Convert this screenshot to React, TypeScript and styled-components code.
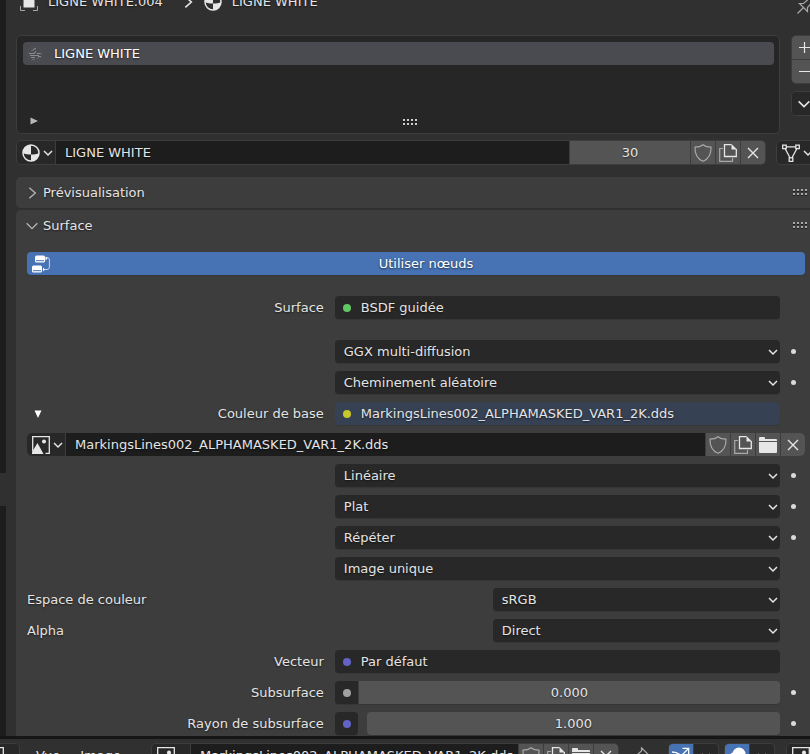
import React, { useState } from "react";
import styled, { createGlobalStyle, css } from "styled-components";

const GlobalStyle = createGlobalStyle`
  *, *::before, *::after { box-sizing: border-box; }
  body {
    margin: 0;
    background: #303030;
    color: #e4e4e4;
    font: 13px/18px "DejaVu Sans", sans-serif;
    overflow: hidden;
  }
  button, input, select {
    margin: 0;
    padding: 0;
    border: 0;
    background: none;
    color: inherit;
    font: inherit;
    text-shadow: inherit;
    min-width: 0;
  }
  svg { display: block; flex: none; }
`;

/* ---------- layout ---------- */

const Screen = styled.div`
  display: flex;
  flex-direction: column;
  height: 100vh;
  overflow: hidden;
  text-shadow: 0 1px 2px rgba(0, 0, 0, 0.6);
`;

const Workspace = styled.div`
  display: flex;
  flex: 1;
  min-height: 0;
  overflow: hidden;
`;

const Gutter = styled.div`
  display: flex;
  flex-direction: column;
  flex: 0 0 6px;
  gap: 33px;
`;

const GutterArea = styled.div<{ $grow: number }>`
  flex: ${(p) => p.$grow} 1 0;
  background: #1d1d1d;
`;

const Editor = styled.main`
  flex: 1;
  min-width: 0;
  margin: 0 -6px 0 10px;
`;

const Breadcrumb = styled.nav`
  display: flex;
  align-items: flex-end;
  height: 35px;
  padding: 0 1px 21px 4px;
  overflow: hidden;
`;

const Crumbs = styled.div`
  display: flex;
  flex: 1;
  align-items: center;
  height: 24px;
`;

const Crumb = styled.span`
  display: flex;
  align-items: center;
  gap: 10px;
`;

const CrumbArrow = styled.span`
  margin: 0 8px 0 17px;
`;

const SlotArea = styled.section`
  display: flex;
  gap: 11px;
  margin-bottom: 6px;
`;

const SlotList = styled.div`
  display: flex;
  flex: 1;
  flex-direction: column;
  justify-content: space-between;
  height: 99px;
  padding: 6px 5px 6px 6px;
  border: 1px solid #3d3d3d;
  border-radius: 5px;
  background: #262626;
`;

const Slot = styled.button`
  display: flex;
  align-items: center;
  gap: 10px;
  height: 23px;
  padding-left: 3px;
  border-radius: 4px;
  background: #4a4b50;
  color: #ffffff;
`;

const SlotFooter = styled.div`
  display: grid;
  grid-template-columns: 23fr auto 22fr;
  align-items: center;
  padding: 0 0 0 7px;
  height: 12px;
  > :last-child { align-self: end; }
`;

const SideTools = styled.div`
  display: flex;
  flex-direction: column;
  gap: 7px;
  width: 25px;
`;

const Cluster = styled.div<{ $vertical?: boolean; $grow?: boolean }>`
  display: flex;
  flex-direction: ${(p) => (p.$vertical ? "column" : "row")};
  flex: ${(p) => (p.$grow ? "1" : "none")};
  gap: 1px;
  min-width: 0;
  overflow: hidden;
  border-radius: 5px;
  background: #3d3d3d;
`;

const Framed = styled(Cluster)`
  border: 1px solid #3d3d3d;
`;

const DataRow = styled.div`
  display: flex;
  gap: 10px;
  margin-bottom: 12px;
`;

/* ---------- controls ---------- */

const IconButton = styled.button<{ $dark?: boolean; $wide?: boolean; $on?: boolean }>`
  display: flex;
  flex: none;
  align-items: center;
  justify-content: ${(p) => (p.$wide ? "flex-start" : "center")};
  gap: 2px;
  width: ${(p) => (p.$wide ? 38 : 24)}px;
  height: 23px;
  padding-left: ${(p) => (p.$wide ? 5 : 0)}px;
  background: ${(p) => (p.$on ? "#4772b3" : p.$dark ? "#282828" : "#545454")};
`;

const NameInput = styled.input`
  flex: 1;
  height: 23px;
  padding: 0 4px 0 9px;
  background: #1d1d1d;
  text-overflow: clip;
`;

const UserCount = styled.button`
  flex: none;
  width: 120px;
  height: 23px;
  background: #545454;
`;

const Panel = styled.section`
  margin-bottom: 2px;
  padding: 0 11px;
  border-radius: 5px;
  background: #3d3d3d;
`;

const PanelHeader = styled.header`
  display: flex;
  align-items: center;
  justify-content: space-between;
  height: 31px;
  margin: 0 -3px;
`;

const PanelToggle = styled.button`
  display: flex;
  align-items: center;
  gap: 3px;
`;

const PanelBody = styled.div`
  display: flex;
  flex-direction: column;
  gap: 8px;
  padding: 11px 0 8px;
`;

const NodesButton = styled.button`
  display: grid;
  grid-template-columns: 26px 1fr;
  align-items: center;
  height: 23px;
  margin-bottom: 13px;
  padding: 0 5px;
  border-radius: 4px;
  background: #4772b3;
  color: #ffffff;
  box-shadow: 0 1px 0 #373737;
`;

const NodesLabel = styled.span`
  padding-right: 6px;
`;

const Property = styled.div<{ $split?: "even" | "wide"; $spaced?: boolean }>`
  display: grid;
  grid-template-columns: ${(p) =>
    p.$split === "wide" ? "minmax(0, 19fr) minmax(0, 12fr) 14px" : "minmax(0, 2fr) minmax(0, 3fr) 14px"};
  column-gap: 11px;
  align-items: center;
  height: 23px;
  margin-bottom: ${(p) => (p.$spaced ? 13 : 0)}px;
`;

const LabelCell = styled.div<{ $left?: boolean }>`
  display: flex;
  align-items: center;
  justify-content: ${(p) => (p.$left ? "flex-start" : "space-between")};
  white-space: nowrap;
`;

const Label = styled.label<{ $left?: boolean }>`
  margin-left: ${(p) => (p.$left ? "0" : "auto")};
`;

const Expander = styled.button`
  width: 22px;
  display: flex;
  justify-content: center;
`;

const field = css`
  height: 23px;
  border-radius: 4px;
  background: #282828;
  box-shadow: 0 1px 0 #363636;
`;

const SelectWrap = styled.span`
  display: grid;
  align-items: center;
  > * { grid-area: 1 / 1; }
  > svg { justify-self: end; margin-right: 1px; pointer-events: none; }
`;

const Select = styled.select`
  ${field}
  width: 100%;
  padding: 0 20px 0 9px;
  appearance: none;
`;

const SocketButton = styled.button<{ $linked?: boolean }>`
  ${field}
  display: flex;
  align-items: center;
  gap: 10px;
  padding: 0 8px;
  background: ${(p) => (p.$linked ? "#364154" : "#282828")};
`;

const SocketDot = styled.span<{ $color: string }>`
  width: 8px;
  height: 8px;
  border-radius: 50%;
  background: ${(p) => p.$color};
`;

const NumberField = styled.div<{ $gap: number }>`
  display: flex;
  gap: ${(p) => p.$gap}px;
`;

const SocketSquare = styled.button<{ $joined?: boolean }>`
  ${field}
  display: flex;
  flex: none;
  align-items: center;
  width: 23px;
  padding-left: 8px;
  border-radius: ${(p) => (p.$joined ? "4px 0 0 4px" : "4px")};
`;

const NumberInput = styled.input<{ $joined?: boolean }>`
  ${field}
  flex: 1;
  border-radius: ${(p) => (p.$joined ? "0 4px 4px 0" : "4px")};
  background: #545454;
  text-align: center;
`;

const KeyDot = styled.button`
  width: 5px;
  height: 5px;
  border-radius: 50%;
  background: #dadada;
`;

/* ---------- image editor header ---------- */

const ImageBar = styled.footer`
  display: flex;
  flex: 0 0 18px;
  align-items: flex-start;
  padding-top: 4px;
  border-top: 3px solid #161616;
  overflow: hidden;
`;

const MenuButton = styled.button`
  height: 25px;
  padding: 0 10px;
`;

const MenuGroup = styled.div`
  display: flex;
  flex: none;
  margin: 0 20px 0 6px;
`;

const EditorType = styled(Framed)`
  margin-left: -20px;
`;

const BarTools = styled.div`
  display: flex;
  flex: none;
  gap: 5px;
  margin: 0 -16px 0 12px;
`;

const PinButton = styled.button`
  display: flex;
  align-items: center;
  height: 25px;
  margin-right: 14px;
`;

const ModeCluster = styled(Framed)`
  &:last-child { margin-left: 6px; }
`;

/* ---------- icons ---------- */

const Chevron = ({ dir = "down", size = 12, color = "#e4e4e4", weight = 1.5 }: { dir?: "down" | "right"; size?: number; color?: string; weight?: number }) => (
  <svg width={size} height={size} viewBox="0 0 12 12" fill="none" stroke={color} strokeWidth={weight}>
    <path d={dir === "down" ? "M2 4 L6 8 L10 4" : "M4 2 L8.5 6 L4 10"} />
  </svg>
);

const MaterialIcon = () => (
  <svg width="18" height="18" viewBox="0 0 18 18">
    <circle cx="9" cy="9" r="8" fill="none" stroke="#e6e6e6" strokeWidth="1.5" />
    <path d="M9 .7 V10.500 C6 10.500 3 10 .9 9 A8.300 8.300 0 0 1 9 .7Z" fill="#e6e6e6" />
    <path d="M9 10.500 C12 10.500 15 10 17.200 9 A8.300 8.300 0 0 1 9 17.300Z" fill="#e6e6e6" />
  </svg>
);

const ObjectIcon = () => (
  <svg width="18" height="18" viewBox="0 0 18 18">
    <rect x="3.500" y="3.500" width="11" height="11" fill="#e6e6e6" />
    <path d="M.5 5 V.5 H5 M13 .5 H17.500 V5 M17.500 13 V17.500 H13 M5 17.500 H.5 V13" fill="none" stroke="#a6a6a6" />
  </svg>
);

const PinIcon = () => (
  <svg width="18" height="18" viewBox="0 0 18 18" fill="none" stroke="#a9a9a9" strokeWidth="1.200">
    <path d="M.5 17.500 L6.500 11.500 M2.500 7.500 H6.500 L10.500 4 V.8 L17.200 7.500 H14 L10.500 11.500 V15.500 Z" />
  </svg>
);

const ThumbIcon = () => (
  <svg width="18" height="18" viewBox="0 0 18 18" fill="none" stroke="#8b8b8b">
    <circle cx="9" cy="9" r="7.500" stroke="#606164" strokeDasharray="1 2" />
    <path d="M3 8.500 H8 L10 6.500 M4 10.500 H13 M5 12.500 H9 M11 8.500 H15 M7 4.500 L10 3.500 M12 11.500 H15" strokeWidth="1.200" />
    <path d="M5 6 L8 5 M11 14 L13 12 M6 14.500 H9" stroke="#6e6f72" />
  </svg>
);

const ShieldIcon = () => (
  <svg width="18" height="18" viewBox="0 0 18 18" fill="none" stroke="#a9a9a9" strokeWidth="1.200">
    <path d="M9 .8 C7 2.500 4.500 3.200 1 3.200 C.8 9 2.500 14.500 9 17.200 C15.500 14.500 17.200 9 17 3.200 C13.500 3.200 11 2.500 9 .8Z" />
  </svg>
);

const CopyIcon = () => (
  <svg width="18" height="18" viewBox="0 0 18 18" fill="none">
    <path d="M4 4.500 H.7 V17.300 H13.500 V14" stroke="#a9a9a9" strokeWidth="1.200" />
    <path d="M12.500 .7 H5.500 V12.500 H17.300 V5" stroke="#e6e6e6" strokeWidth="1.300" />
    <path d="M12.500 0 L18 5.500 H12.500Z" fill="#e6e6e6" />
  </svg>
);

const FolderIcon = () => (
  <svg width="18" height="18" viewBox="0 0 18 18" fill="#e6e6e6">
    <path d="M0 5 V2 Q0 1 1 1 H5 Q6 1 6 2 V3 H17 Q18 3 18 4 V5Z" />
    <path d="M0 6 H18 V16 Q18 17 17 17 H1 Q0 17 0 16Z" />
  </svg>
);

const CloseIcon = () => (
  <svg width="18" height="18" viewBox="0 0 18 18" stroke="#e6e6e6" strokeWidth="1.400">
    <path d="M4 4 L14 14 M14 4 L4 14" />
  </svg>
);

const PlusIcon = () => (
  <svg width="18" height="18" viewBox="0 0 18 18" stroke="#e6e6e6" strokeWidth="1.200">
    <path d="M9.500 3 V14 M4 8.500 H15" />
  </svg>
);

const MinusIcon = () => (
  <svg width="18" height="18" viewBox="0 0 18 18" stroke="#e6e6e6" strokeWidth="1.200">
    <path d="M4 8.500 H15" />
  </svg>
);

const MeshIcon = () => (
  <svg width="18" height="18" viewBox="0 0 18 18" fill="none" stroke="#e6e6e6" strokeWidth="1.300">
    <path d="M.7 1.200 H4.200 V4.700 H.7Z M13.800 1.200 H17.300 V4.700 H13.800Z M7.200 13.800 H10.800 V17.300 H7.200Z M4.200 2.800 H13.800 M3.200 4.700 L8 13.800 M14.800 4.700 L10 13.800" />
  </svg>
);

const NodesIcon = () => (
  <svg width="18" height="18" viewBox="0 0 18 18" fill="none">
    <rect x="3" y=".5" width="10" height="7" rx="1.500" fill="#fff" />
    <rect x="0" y="10.500" width="10" height="7" rx="1.500" fill="#fff" />
    <path d="M4 5.700 H12 M1 15.700 H9" stroke="#4772b3" />
    <path d="M14 2.500 H15 Q17.400 2.500 17.400 5 V12 Q17.400 14.500 15 14.500 H12" stroke="#c6d4ea" />
    <path d="M13.500 1.500 L15.500 3.500 L13.500 5.500Z M11 12.500 L13 14.500 L11 16.500Z" fill="#fff" />
  </svg>
);

const ImageIcon = () => (
  <svg width="18" height="18" viewBox="0 0 18 18">
    <path d="M.7 15 V.7 H17.300 V17.300 H13.500" fill="none" stroke="#e6e6e6" strokeWidth="1.300" />
    <path d="M0 18 V16 L5.500 7 L11.500 18Z" fill="#e6e6e6" />
    <circle cx="12" cy="5.500" r="2" fill="#e6e6e6" />
  </svg>
);

const GizmoIcon = () => (
  <svg width="18" height="18" viewBox="0 0 18 18" fill="none" stroke="#fff" strokeWidth="1.300">
    <path d="M0 5 Q10 5 13 17 M9 9 L16.500 1.500 M10.500 1.300 H16.700 V7.500" />
  </svg>
);

const OverlayIcon = () => (
  <svg width="18" height="18" viewBox="0 0 18 18">
    <circle cx="11" cy="7" r="6.500" fill="#fff" />
    <circle cx="6.500" cy="11.500" r="5.500" fill="none" stroke="#fff" strokeWidth="1.300" />
  </svg>
);

const Triangle = ({ dir }: { dir: "down" | "right" }) => (
  <svg width="8" height="8" viewBox="0 0 8 8" fill={dir === "down" ? "#fff" : "#b9b9b9"}>
    <path d={dir === "down" ? "M.5 .5 H7.500 L4 8Z" : "M.5 .5 L8 4 L.5 7.500Z"} />
  </svg>
);

const Grip = ({ color = "#a8a8a8" }: { color?: string }) => (
  <svg width="15" height="8" viewBox="0 0 15 8">
    {[0, 4, 8, 12].map((x) =>
      [0, 4].map((y) => (
        <g key={`${x}-${y}`}>
          <rect x={x} y={y + 1} width="2" height="2" fill="#1a1a1a" />
          <rect x={x} y={y} width="2" height="2" fill={color} />
        </g>
      ))
    )}
  </svg>
);

/* ---------- rows ---------- */

type DropdownRowProps = { id: string; value: string; label?: string; name?: string; dot?: boolean };

const DropdownRow = ({ id, value, label, name, dot }: DropdownRowProps) => (
  <Property $split={label ? "wide" : "even"}>
    <LabelCell $left>{label && <Label $left htmlFor={id}>{label}</Label>}</LabelCell>
    <SelectWrap>
      <Select id={id} aria-label={label ? undefined : name} defaultValue={value}>
        <option>{value}</option>
      </Select>
      <Chevron />
    </SelectWrap>
    {dot && <KeyDot aria-label={`Animer ${name}`} />}
  </Property>
);

type SocketRowProps = { id: string; label: string; value: string; color: string; linked?: boolean; expander?: boolean; spaced?: boolean };

const SocketRow = ({ id, label, value, color, linked, expander, spaced }: SocketRowProps) => (
  <Property $spaced={spaced}>
    <LabelCell>
      {expander && (
        <Expander aria-label="Replier" aria-expanded="true">
          <Triangle dir="down" />
        </Expander>
      )}
      <Label htmlFor={id}>{label}</Label>
    </LabelCell>
    <SocketButton id={id} $linked={linked}>
      <SocketDot $color={color} />
      {value}
    </SocketButton>
  </Property>
);

const NumberRow = ({ id, label, value, color, joined }: { id: string; label: string; value: string; color: string; joined?: boolean }) => (
  <Property>
    <LabelCell>
      <Label htmlFor={id}>{label}</Label>
    </LabelCell>
    <NumberField $gap={joined ? 1 : 9}>
      <SocketSquare $joined={joined} aria-label={`Entrée ${label}`}>
        <SocketDot $color={color} />
      </SocketSquare>
      <NumberInput id={id} $joined={joined} defaultValue={value} />
    </NumberField>
    <KeyDot aria-label={`Animer ${label}`} />
  </Property>
);

const IMAGE = "MarkingsLines002_ALPHAMASKED_VAR1_2K.dds";

const ImageActions = () => (
  <>
    <IconButton aria-label="Utilisateur factice"><ShieldIcon /></IconButton>
    <IconButton aria-label="Dupliquer"><CopyIcon /></IconButton>
    <IconButton aria-label="Ouvrir"><FolderIcon /></IconButton>
    <IconButton aria-label="Délier"><CloseIcon /></IconButton>
  </>
);

export default function App() {
  const [nodes, setNodes] = useState(true);

  return (
    <>
      <GlobalStyle />
      <Screen>
        <Workspace>
          <Gutter>
            <GutterArea $grow={473} />
            <GutterArea $grow={230} />
          </Gutter>
          <Editor>
            <Breadcrumb aria-label="Contexte">
              <Crumbs>
                <Crumb><ObjectIcon />LIGNE WHITE.004</Crumb>
                <CrumbArrow><Chevron dir="right" size={16} weight={1.200} /></CrumbArrow>
                <Crumb><MaterialIcon />LIGNE WHITE</Crumb>
              </Crumbs>
              <PinIcon />
            </Breadcrumb>

            <SlotArea>
              <SlotList>
                <Slot><ThumbIcon />LIGNE WHITE</Slot>
                <SlotFooter>
                  <Triangle dir="right" />
                  <Grip color="#d0d0d0" />
                </SlotFooter>
              </SlotList>
              <SideTools>
                <Framed $vertical>
                  <IconButton aria-label="Ajouter"><PlusIcon /></IconButton>
                  <IconButton aria-label="Retirer"><MinusIcon /></IconButton>
                </Framed>
                <Framed>
                  <IconButton $dark aria-label="Options"><Chevron size={16} weight={1.200} /></IconButton>
                </Framed>
              </SideTools>
            </SlotArea>

            <DataRow>
              <Framed $grow>
                <IconButton $dark $wide aria-label="Parcourir les matériaux"><MaterialIcon /><Chevron /></IconButton>
                <NameInput aria-label="Nom du matériau" defaultValue="LIGNE WHITE" />
                <UserCount>30</UserCount>
                <IconButton aria-label="Utilisateur factice"><ShieldIcon /></IconButton>
                <IconButton aria-label="Dupliquer"><CopyIcon /></IconButton>
                <IconButton aria-label="Délier"><CloseIcon /></IconButton>
              </Framed>
              <Framed>
                <IconButton $dark $wide aria-label="Lier à"><MeshIcon /><Chevron /></IconButton>
              </Framed>
            </DataRow>

            <Panel>
              <PanelHeader>
                <PanelToggle aria-expanded="false"><Chevron dir="right" size={16} color="#b4b4b4" weight={1} />Prévisualisation</PanelToggle>
                <Grip />
              </PanelHeader>
            </Panel>

            <Panel>
              <PanelHeader>
                <PanelToggle aria-expanded="true"><Chevron size={16} color="#b4b4b4" weight={1} />Surface</PanelToggle>
                <Grip />
              </PanelHeader>
              <PanelBody>
                <NodesButton aria-pressed={nodes} onClick={() => setNodes(!nodes)}>
                  <NodesIcon />
                  <NodesLabel>Utiliser nœuds</NodesLabel>
                </NodesButton>
                <SocketRow id="surface" label="Surface" value="BSDF guidée" color="#63c763" spaced />
                <DropdownRow id="distribution" name="Distribution" value="GGX multi-diffusion" dot />
                <DropdownRow id="sss" name="Méthode de subsurface" value="Cheminement aléatoire" dot />
                <SocketRow id="base" label="Couleur de base" value={IMAGE} color="#c7c729" linked expander />
                <Cluster>
                  <IconButton $dark $wide aria-label="Parcourir les images"><ImageIcon /><Chevron /></IconButton>
                  <NameInput aria-label="Nom de l'image" defaultValue={IMAGE} />
                  <ImageActions />
                </Cluster>
                <DropdownRow id="interp" name="Interpolation" value="Linéaire" dot />
                <DropdownRow id="projection" name="Projection" value="Plat" dot />
                <DropdownRow id="extension" name="Extension" value="Répéter" dot />
                <DropdownRow id="source" name="Source" value="Image unique" />
                <DropdownRow id="colorspace" label="Espace de couleur" value="sRGB" />
                <DropdownRow id="alpha" label="Alpha" value="Direct" />
                <SocketRow id="vector" label="Vecteur" value="Par défaut" color="#6363c7" />
                <NumberRow id="subsurface" label="Subsurface" value="0.000" color="#a1a1a1" joined />
                <NumberRow id="radius" label="Rayon de subsurface" value="1.000" color="#6363c7" />
              </PanelBody>
            </Panel>
          </Editor>
        </Workspace>

        <ImageBar>
          <EditorType>
            <IconButton $dark $wide aria-label="Type d'éditeur"><ImageIcon /></IconButton>
          </EditorType>
          <MenuGroup>
            <MenuButton>Vue</MenuButton>
            <MenuButton>Image</MenuButton>
          </MenuGroup>
          <Framed $grow>
            <IconButton $dark $wide aria-label="Parcourir les images"><ImageIcon /></IconButton>
            <NameInput aria-label="Image affichée" defaultValue={IMAGE} />
            <ImageActions />
          </Framed>
          <BarTools>
            <PinButton aria-label="Épingler"><PinIcon /></PinButton>
            <ModeCluster>
              <IconButton $on aria-label="Gizmos"><GizmoIcon /></IconButton>
              <IconButton $dark aria-label="Options des gizmos"><Chevron /></IconButton>
            </ModeCluster>
            <ModeCluster>
              <IconButton $on aria-label="Surimpressions"><OverlayIcon /></IconButton>
              <IconButton $dark aria-label="Options des surimpressions"><Chevron /></IconButton>
            </ModeCluster>
            <ModeCluster>
              <IconButton $dark $wide aria-label="Canaux"><ImageIcon /></IconButton>
            </ModeCluster>
          </BarTools>
        </ImageBar>
      </Screen>
    </>
  );
}
